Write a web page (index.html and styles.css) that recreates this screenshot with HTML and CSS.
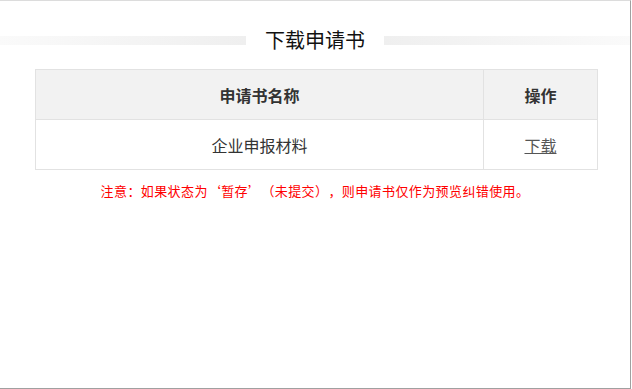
FILE: index.html
```html
<!DOCTYPE html>
<html lang="zh-CN">
<head>
  <meta charset="UTF-8" />
  <title>下载申请书</title>
  <meta name="viewport" content="width=device-width, initial-scale=1.0" />
  <link rel="stylesheet" href="styles.css">
</head>
<body>

  <div class="frame">
    <div class="title-row">
      <span class="band band-left"></span>
      <h1 class="title">下载申请书</h1>
      <span class="band band-right"></span>
    </div>

    <table class="doc-table">
      <thead>
        <tr>
          <th class="col-name">申请书名称</th>
          <th class="col-op">操作</th>
        </tr>
      </thead>
      <tbody>
        <tr>
          <td>企业申报材料</td>
          <td><a href="#" class="download">下载</a></td>
        </tr>
      </tbody>
    </table>

    <p class="notice">注意：如果状态为‘暂存’（未提交），则申请书仅作为预览纠错使用。</p>
  </div>

</body>
</html>
```

FILE: styles.css
```css
* {
  box-sizing: border-box;
}

body {
  margin: 0;
  padding: 0;
  font-family: "Noto Sans CJK SC", "Noto Sans", sans-serif;
  background: #fff;
  color: #333;
}

.frame {
  width: 631px;
  height: 389px;
  border-top: 1px solid #dcdcdc;
  border-right: 1px solid #a0a0a0;
  border-bottom: 1px solid #a0a0a0;
  background: #fff;
}

.title-row {
  display: flex;
  align-items: center;
  height: 28px;
  margin-top: 25px;
}

.band {
  flex: 1;
  height: 9px;
}

.band-left {
  background: linear-gradient(to right, #fafafa, #efefef);
}

.band-right {
  background: linear-gradient(to right, #efefef, #fafafa);
}

.title {
  margin: 0;
  padding: 0 19px 0 19px;
  font-size: 20px;
  font-weight: normal;
  line-height: 28px;
  color: #111;
}

.doc-table {
  margin: 15px 0 0 35px;
  width: 563px;
  border-collapse: collapse;
  font-size: 16px;
}

.doc-table th,
.doc-table td {
  border: 1px solid #e2e2e2;
  height: 50px;
  padding: 0;
  text-align: center;
  color: #333;
}

.doc-table th {
  background: #f2f2f2;
  font-weight: bold;
}

.col-op {
  width: 114px;
}

.download {
  color: #555;
  text-decoration: underline;
}

.notice {
  margin: 11px 0 0 0;
  font-size: 13px;
  line-height: 20px;
  letter-spacing: 0.4px;
  color: #ff0000;
  text-align: center;
  text-spacing-trim: space-all;
}
```
